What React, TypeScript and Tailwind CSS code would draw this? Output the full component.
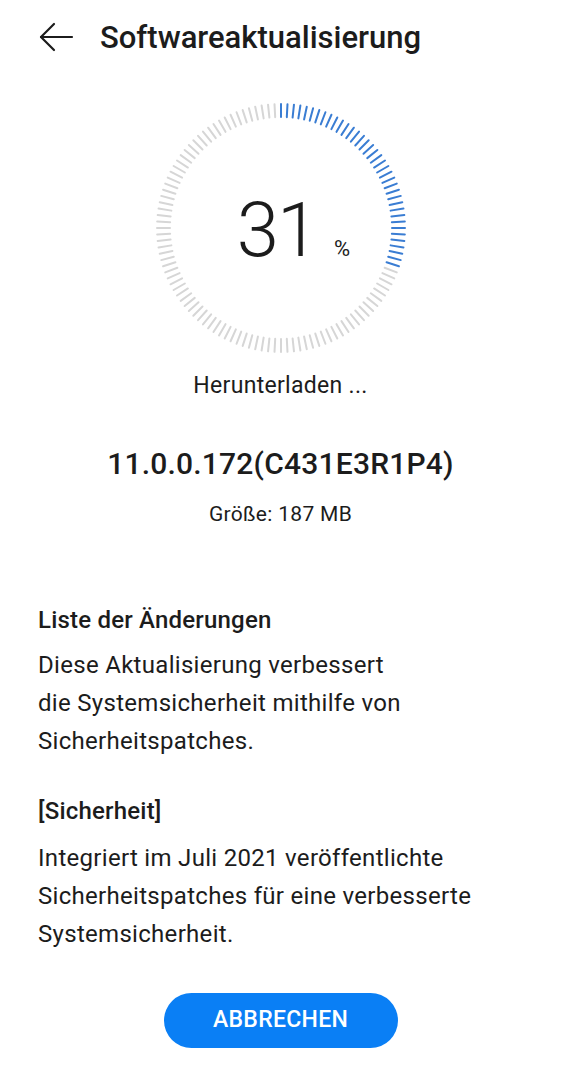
import React from 'react';

const TICKS = 120;
const PROGRESS = 31;

function ProgressDial() {
  const cx = 125;
  const cy = 125;
  const rOuter = 124;
  const rInner = 111;
  const active = Math.round((PROGRESS / 100) * TICKS);

  return (
    <div className="relative w-[250px] h-[250px]">
      <svg width="250" height="250" viewBox="0 0 250 250">
        {Array.from({ length: TICKS }).map((_, i) => {
          const a = (i / TICKS) * Math.PI * 2 - Math.PI / 2;
          const x1 = cx + Math.cos(a) * rInner;
          const y1 = cy + Math.sin(a) * rInner;
          const x2 = cx + Math.cos(a) * rOuter;
          const y2 = cy + Math.sin(a) * rOuter;
          return (
            <line
              key={i}
              x1={x1}
              y1={y1}
              x2={x2}
              y2={y2}
              stroke={i < active ? '#3a7dd3' : '#d6d6d6'}
              strokeWidth={2}
              strokeLinecap="round"
            />
          );
        })}
      </svg>
      <div className="absolute inset-0 flex items-center justify-center">
        <div className="flex items-baseline pl-[26px] pt-[4px]">
          <span className="text-[76px] font-light leading-none text-[#1c1c1c] tracking-[-2px]">31</span>
          <span className="text-[22px] leading-none text-[#1c1c1c] ml-[17px]">%</span>
        </div>
      </div>
    </div>
  );
}

export default function App() {
  return (
    <div className="min-h-screen w-full bg-white flex flex-col" style={{ fontFamily: 'Roboto, "Noto Sans", sans-serif' }}>
      {/* Header */}
      <div className="h-[74px] flex items-center pl-[38px]">
        <svg width="36" height="30" viewBox="0 0 36 30" fill="none" stroke="#1c1c1c" strokeWidth="2.2" strokeLinecap="round" strokeLinejoin="round">
          <path d="M34 15H3" />
          <path d="M16 2L3 15L16 28" />
        </svg>
        <h1 className="ml-[26px] text-[31px] font-medium text-[#1c1c1c] leading-none">
          Softwareaktualisierung
        </h1>
      </div>

      {/* Dial */}
      <div className="flex justify-center mt-[29px]">
        <ProgressDial />
      </div>

      <p className="mt-[19px] text-center text-[23px] leading-[28px] tracking-[0.3px] text-[#1c1c1c]">Herunterladen ...</p>

      <p className="mt-[46px] text-center text-[30px] leading-[36px] font-medium tracking-[0.2px] text-[#1c1c1c]">11.0.0.172(C431E3R1P4)</p>
      <p className="mt-[19px] text-center text-[21px] leading-[26px] tracking-[0.3px] text-[#1c1c1c]">Größe: 187 MB</p>

      {/* Changelog */}
      <div className="px-[38px] flex flex-col">
        <h2 className="mt-[78px] text-[24px] leading-[30px] font-medium tracking-[0.2px] text-[#1c1c1c]">Liste der Änderungen</h2>
        <p className="mt-[11px] text-[24px] leading-[38px] tracking-[0.3px] text-[#1c1c1c]">
          Diese Aktualisierung verbessert
          <br />
          die Systemsicherheit mithilfe von
          <br />
          Sicherheitspatches.
        </p>

        <h2 className="mt-[36px] text-[24px] leading-[30px] font-medium tracking-[0.2px] text-[#1c1c1c]">[Sicherheit]</h2>
        <p className="mt-[13px] text-[24px] leading-[38px] tracking-[0.3px] text-[#1c1c1c]">
          Integriert im Juli 2021 veröffentlichte
          <br />
          Sicherheitspatches für eine verbesserte
          <br />
          Systemsicherheit.
        </p>
      </div>

      <div className="flex justify-center mt-[40px]">
        <button className="w-[234px] h-[55px] rounded-full bg-[#0a7ff5] text-white text-[23px] font-medium tracking-[0.3px]">
          ABBRECHEN
        </button>
      </div>
    </div>
  );
}
